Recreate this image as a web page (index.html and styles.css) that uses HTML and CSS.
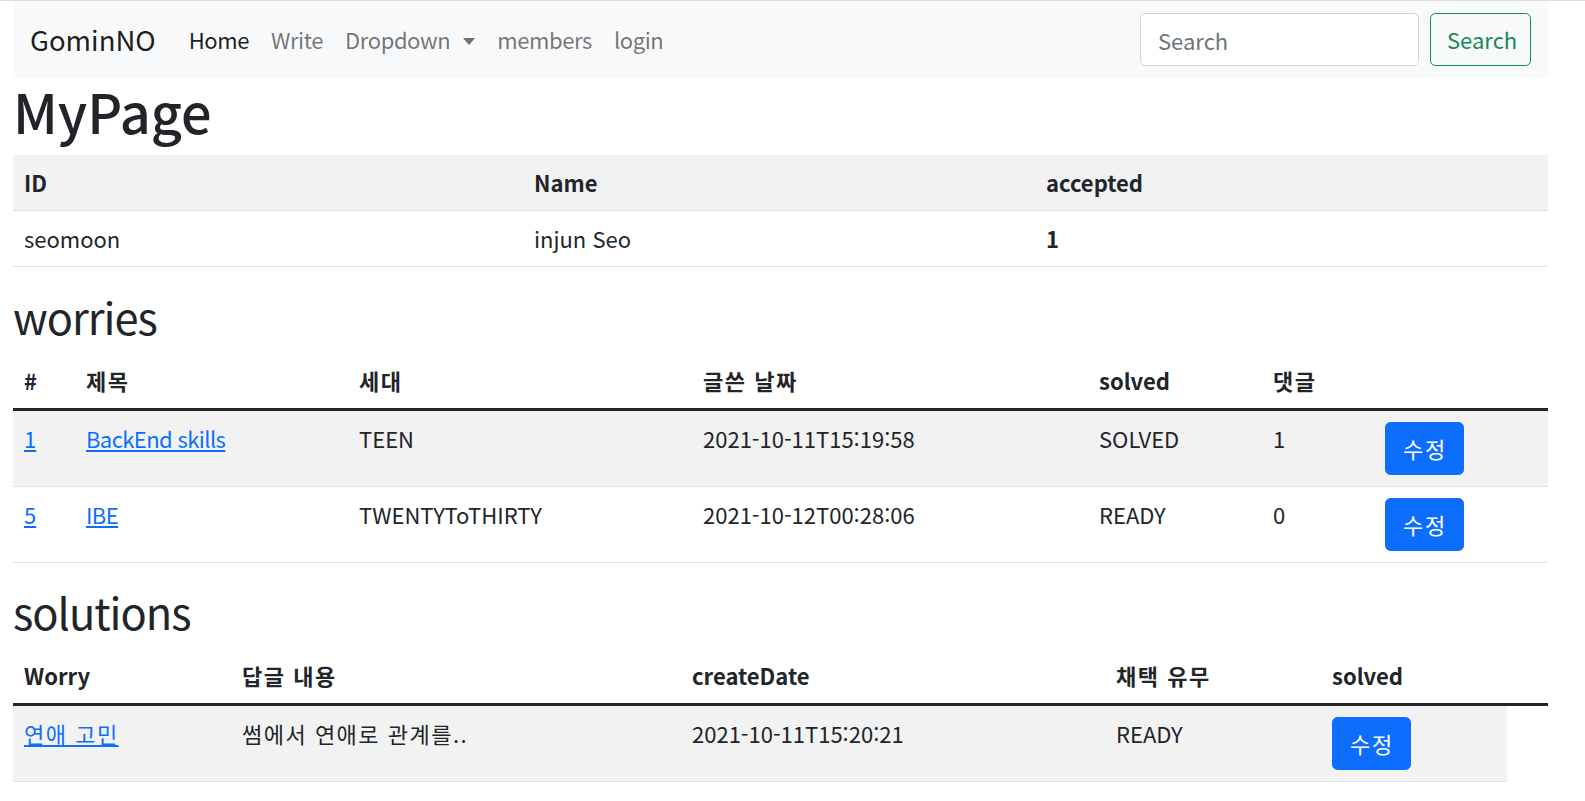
FILE: index.html
```html
<!DOCTYPE html>
<html lang="ko">
<head>
<meta charset="utf-8">
<title>MyPage</title>
<link rel="stylesheet" href="styles.css">
</head>
<body>
<div class="topline"></div>
<div class="page">
  <nav class="navbar">
    <a class="brand" href="#">GominNO</a>
    <ul class="nav">
      <li><a class="nav-link active" href="#">Home</a></li>
      <li><a class="nav-link" href="#">Write</a></li>
      <li><a class="nav-link dropdown" href="#">Dropdown</a></li>
      <li><a class="nav-link" href="#">members</a></li>
      <li><a class="nav-link" href="#">login</a></li>
    </ul>
    <form class="search">
      <input class="search-input" type="search" placeholder="Search">
      <button class="search-btn" type="button">Search</button>
    </form>
  </nav>

  <h1 class="title">MyPage</h1>
  <table class="table first">
    <colgroup>
      <col class="c-id"><col class="c-name"><col class="c-acc">
    </colgroup>
    <tbody>
      <tr class="odd"><th>ID</th><th>Name</th><th>accepted</th></tr>
      <tr><td>seomoon</td><td>injun Seo</td><th>1</th></tr>
    </tbody>
  </table>

  <h2 class="subtitle">worries</h2>
  <table class="table">
    <colgroup>
      <col class="w1"><col class="w2"><col class="w3"><col class="w4"><col class="w5"><col class="w6"><col class="w7">
    </colgroup>
    <thead>
      <tr class="head"><th>#</th><th class="ko">제목</th><th class="ko">세대</th><th class="ko">글쓴 날짜</th><th>solved</th><th class="ko">댓글</th><th></th></tr>
    </thead>
    <tbody>
      <tr class="odd">
        <td><a href="#">1</a></td><td><a class="narrow" href="#">BackEnd skills</a></td><td>TEEN</td><td>2021-10-11T15:19:58</td><td>SOLVED</td><td>1</td>
        <td><button class="btn ko" type="button">수정</button></td>
      </tr>
      <tr>
        <td><a href="#">5</a></td><td><a class="narrow" href="#">IBE</a></td><td>TWENTYToTHIRTY</td><td>2021-10-12T00:28:06</td><td>READY</td><td>0</td>
        <td><button class="btn ko" type="button">수정</button></td>
      </tr>
    </tbody>
  </table>

  <h2 class="subtitle">solutions</h2>
  <table class="table">
    <colgroup>
      <col class="s1"><col class="s2"><col class="s3"><col class="s4"><col class="s5"><col class="s6">
    </colgroup>
    <thead>
      <tr class="head"><th>Worry</th><th class="ko">답글 내용</th><th>createDate</th><th class="ko">채택 유무</th><th>solved</th><th></th></tr>
    </thead>
    <tbody>
      <tr class="odd">
        <td><a class="ko" href="#">연애 고민</a></td><td class="ko">썸에서 연애로 관계를..</td><td>2021-10-11T15:20:21</td><td>READY</td>
        <td><button class="btn ko" type="button">수정</button></td>
      </tr>
    </tbody>
  </table>
</div>
</body>
</html>
```

FILE: styles.css
```css
html, body {
  margin: 0;
  padding: 0;
  background: #fff;
}
body {
  font-family: "Noto Sans CJK KR", "Noto Sans", sans-serif;
  font-size: 22px;
  line-height: 1.5;
  color: #212529;
}
.topline {
  height: 1px;
  background: #dadce0;
}
.page {
  margin-left: 13px;
  width: 1535px;
}
.navbar {
  display: flex;
  align-items: center;
  background: #f8f9fa;
  padding: 11px 17px 11px 17px;
  height: 55px;
}
.brand {
  font-size: 27.5px;
  line-height: 41px;
  color: rgba(0,0,0,.9);
  text-decoration: none;
  margin-right: 22px;
}
.nav {
  display: flex;
  list-style: none;
  margin: 0;
  padding: 0;
  flex: 1;
}
.nav-link {
  display: block;
  padding: 11px;
  color: rgba(0,0,0,.55);
  text-decoration: none;
  letter-spacing: -0.4px;
}
.nav-link.active {
  color: rgba(0,0,0,.9);
}
.dropdown::after {
  content: "";
  display: inline-block;
  margin-left: 13px;
  vertical-align: 4px;
  border-top: 7px solid;
  border-right: 6.5px solid transparent;
  border-left: 6.5px solid transparent;
}
.search {
  display: flex;
  gap: 11px;
}
.search-input {
  box-sizing: border-box;
  width: 279px;
  height: 53px;
  padding: 5px 17px;
  border: 1px solid #ced4da;
  border-radius: 5.5px;
  background: #fff;
  font: inherit;
  color: #212529;
}
.search-input::placeholder {
  color: #6c757d;
}
.search-btn {
  box-sizing: border-box;
  width: 101px;
  height: 53px;
  padding: 5px 16px;
  border: 1.4px solid #198754;
  border-radius: 5.5px;
  background: transparent;
  color: #198754;
  font: inherit;
}
.title {
  margin: 0 0 11px;
  font-size: 54px;
  font-weight: 500;
  line-height: 66px;
}
.subtitle {
  margin: 0 0 11px;
  font-size: 43.4px;
  font-weight: 400;
  letter-spacing: -1px;
  line-height: 1.2;
}
.table {
  width: 1535px;
  table-layout: fixed;
  border-collapse: collapse;
  margin-bottom: 22px;
}
.table.first {
  margin-bottom: 23px;
}
.table th, .table td {
  padding: 11px;
  text-align: left;
  vertical-align: top;
  border-bottom: 1.5px solid #dee2e6;
}
.table th {
  font-weight: 700;
}
.table .head th {
  border-bottom: 3px solid #212529;
}
.odd td, .odd th {
  background: #f2f2f2;
}
.table a {
  color: #0d6efd;
  text-decoration: underline;
}
.ko {
  letter-spacing: 1.5px;
}
.narrow {
  letter-spacing: -0.6px;
}
.btn {
  box-sizing: border-box;
  height: 53px;
  padding: 5px 16px 5px 17px;
  border: 1px solid #0d6efd;
  border-radius: 5.5px;
  background: #0d6efd;
  color: #fff;
  font: inherit;
  letter-spacing: 1.8px;
}
.c-id { width: 510px; }
.c-name { width: 512px; }
.c-acc { width: 513px; }
.w1 { width: 62px; }
.w2 { width: 273px; }
.w3 { width: 344px; }
.w4 { width: 396px; }
.w5 { width: 174px; }
.w6 { width: 112px; }
.w7 { width: 174px; }
.s1 { width: 218px; }
.s2 { width: 450px; }
.s3 { width: 424px; }
.s4 { width: 216px; }
.s5 { width: 186px; }
.s6 { width: 41px; }
```
